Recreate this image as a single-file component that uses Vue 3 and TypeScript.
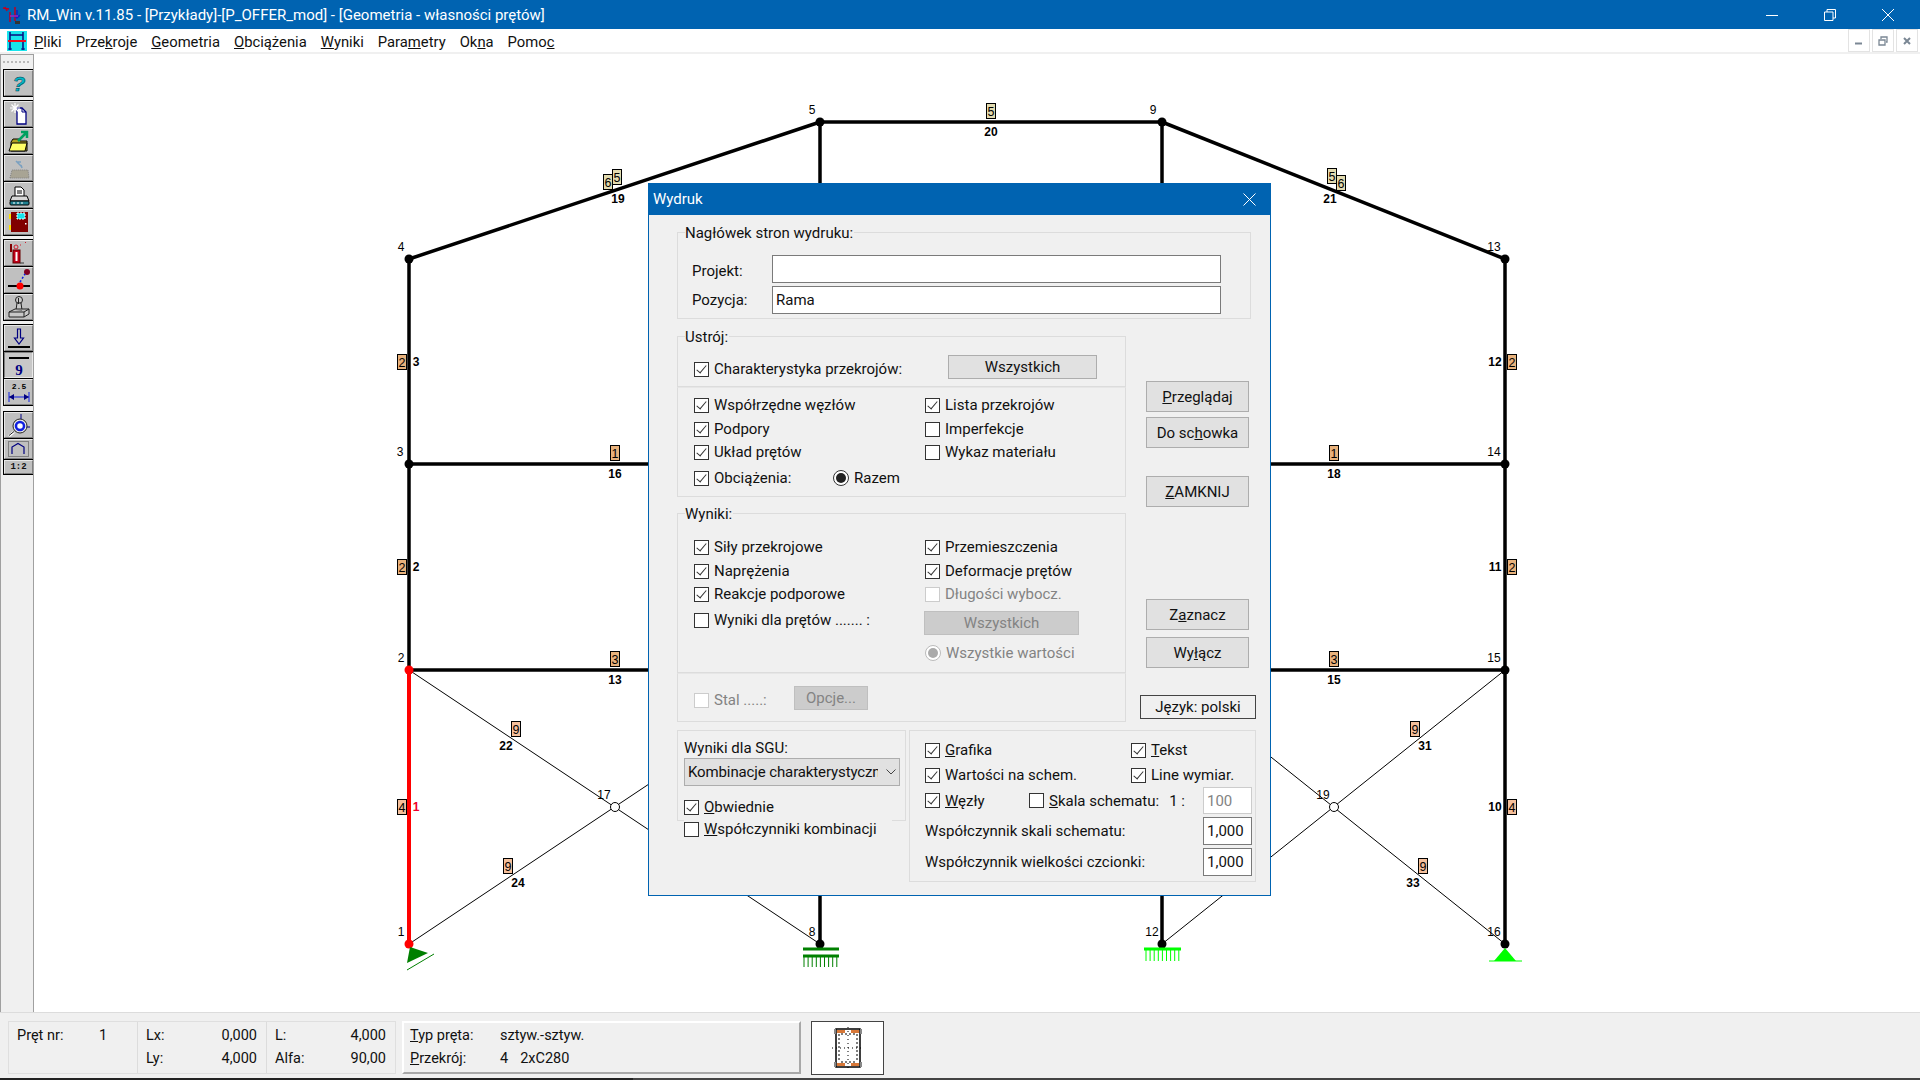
<script setup lang="ts">
interface Label { t: string; x: number; y: number; red?: boolean }
interface Section { t: string; x: number; y: number; c: string }

const menu = [
  ['', 'P', 'liki'], ['Prze', 'k', 'roje'], ['', 'G', 'eometria'], ['', 'O', 'bciążenia'],
  ['', 'W', 'yniki'], ['Para', 'm', 'etry'], ['Ok', 'n', 'a'], ['Pomo', 'c', '']
]

const thick = [
  [409, 944, 409, 259], [409, 259, 820, 122], [820, 122, 1162, 122], [1162, 122, 1505, 259],
  [1505, 259, 1505, 944], [820, 122, 820, 944], [1162, 122, 1162, 944],
  [409, 464, 1505, 464], [409, 670, 1505, 670]
]
const thin = [
  [409, 670, 820, 944], [409, 944, 820, 670], [1162, 670, 1505, 944], [1162, 944, 1505, 670]
]
const blackNodes = [
  [409, 259], [820, 122], [1162, 122], [1505, 259], [409, 464], [1505, 464],
  [1505, 670], [820, 944], [1162, 944], [1505, 944]
]
const nodeLabels: Label[] = [
  { t: '5', x: 812, y: 110 }, { t: '9', x: 1153, y: 110 }, { t: '4', x: 401, y: 247 },
  { t: '13', x: 1494, y: 247 }, { t: '3', x: 400, y: 452 }, { t: '14', x: 1494, y: 452 },
  { t: '2', x: 401, y: 658 }, { t: '15', x: 1494, y: 658 }, { t: '1', x: 401, y: 932 },
  { t: '16', x: 1494, y: 932 }, { t: '8', x: 812, y: 932 }, { t: '12', x: 1152, y: 932 },
  { t: '17', x: 604, y: 795 }, { t: '19', x: 1323, y: 795 }
]
const barLabels: Label[] = [
  { t: '20', x: 991, y: 132 }, { t: '16', x: 615, y: 474 }, { t: '18', x: 1334, y: 474 },
  { t: '13', x: 615, y: 680 }, { t: '15', x: 1334, y: 680 }, { t: '19', x: 618, y: 199 },
  { t: '21', x: 1330, y: 199 }, { t: '3', x: 416, y: 362 }, { t: '12', x: 1495, y: 362 },
  { t: '2', x: 416, y: 567 }, { t: '11', x: 1495, y: 567 }, { t: '1', x: 416, y: 807, red: true },
  { t: '10', x: 1495, y: 807 }, { t: '22', x: 506, y: 746 }, { t: '24', x: 518, y: 883 },
  { t: '31', x: 1425, y: 746 }, { t: '33', x: 1413, y: 883 }
]
const tan = '#e8b27c'
const peach = '#f4bf9b'
const sand = '#e2dbb0'
const sections: Section[] = [
  { t: '5', x: 991, y: 111, c: sand }, { t: '1', x: 615, y: 453, c: tan }, { t: '1', x: 1334, y: 453, c: tan },
  { t: '3', x: 615, y: 659, c: tan }, { t: '3', x: 1334, y: 659, c: tan }, { t: '2', x: 402, y: 362, c: tan },
  { t: '2', x: 1512, y: 362, c: tan }, { t: '2', x: 402, y: 567, c: tan }, { t: '2', x: 1512, y: 567, c: tan },
  { t: '4', x: 402, y: 807, c: peach }, { t: '4', x: 1512, y: 807, c: peach }, { t: '9', x: 516, y: 729, c: peach },
  { t: '9', x: 508, y: 866, c: peach }, { t: '9', x: 1415, y: 729, c: peach }, { t: '9', x: 1423, y: 866, c: peach },
  { t: '6', x: 608, y: 182, c: sand }, { t: '5', x: 617, y: 177, c: sand }, { t: '5', x: 1332, y: 176, c: sand },
  { t: '6', x: 1341, y: 183, c: sand }
]
const ticks8 = Array.from({ length: 9 }, (_, i) => 804 + i * 4.1)
const ticks12 = Array.from({ length: 9 }, (_, i) => 1146 + i * 4.1)
</script>

<template>
  <div class="app">
    <div class="titlebar">
      <svg class="title-icon" width="20" height="20" viewBox="0 0 20 20">
        <path d="M1 3l6 1M3 2l2 4M13 2v14M8 7v10" stroke="#c00020" fill="none" stroke-width="1.5" />
        <path d="M15 5v8M12 10l3 3 3-3" stroke="#1020c0" fill="none" stroke-width="1.5" />
        <path d="M8 11h8" stroke="#a020c0" stroke-width="1.5" />
        <rect x="13" y="16" width="5" height="3" fill="#333" />
      </svg>
      <span class="title-text">RM_Win v.11.85 - [Przykłady]-[P_OFFER_mod] - [Geometria - własności prętów]</span>
      <div class="win-btns">
        <svg width="12" height="12" viewBox="0 0 12 12"><path d="M0 6.5h12" stroke="#fff" /></svg>
        <svg width="12" height="12" viewBox="0 0 12 12"><path d="M.5 3h8.5v8.500h-8.500zM3 3V.5h8.500V9H9" stroke="#fff" fill="none" /></svg>
        <svg width="12" height="12" viewBox="0 0 12 12"><path d="M0 0l12 12M12 0L0 12" stroke="#fff" fill="none" /></svg>
      </div>
    </div>

    <div class="menubar">
      <svg class="menu-icon" width="20" height="20" viewBox="0 0 20 20">
        <rect width="20" height="20" fill="#19e4ec" />
        <path d="M3 1v18M16 1v18M3 4h13" stroke="#0a0a80" fill="none" stroke-width="1.500" />
        <path d="M1 10h18" stroke="#f01020" stroke-width="2" />
        <path d="M1 18h4M14 18h4" stroke="#0a0a80" />
      </svg>
      <span v-for="m in menu" :key="m.join('')" class="menu-item">{{ m[0] }}<u>{{ m[1] }}</u>{{ m[2] }}</span>
      <div class="mdi-btns">
        <span class="mdi"><svg width="10" height="10" viewBox="0 0 10 10"><path d="M1 7.500h7" stroke="#7a8794" stroke-width="2" /></svg></span>
        <span class="mdi"><svg width="10" height="10" viewBox="0 0 10 10"><path d="M1 4h6v5H1zM3 3V1h6v5H8" stroke="#7a8794" fill="none" stroke-width="1.300" /></svg></span>
        <span class="mdi"><svg width="10" height="10" viewBox="0 0 10 10"><path d="M2 2l6 6M8 2L2 8" stroke="#7a8794" fill="none" stroke-width="2" /></svg></span>
      </div>
    </div>

    <div class="middle">
      <div class="toolbar">
        <div class="grip"></div>
        <div class="tb-group">
          <div class="tb-btn">
            <svg width="24" height="24" viewBox="0 0 24 24"><text x="12" y="20" text-anchor="middle" class="q" >?</text></svg>
          </div>
        </div>
        <div class="tb-group">
          <div class="tb-btn">
            <svg width="24" height="24" viewBox="0 0 24 24">
              <path d="M10 6h5l4 4v12H10z" fill="#fff" stroke="#000080" stroke-width="1.300" />
              <path d="M15 6v4h4" fill="none" stroke="#000080" />
              <path d="M8 1v10M3 6h10M4.500 2.500l7 7M11.500 2.500l-7 7" stroke="#fff" stroke-width="1.200" />
            </svg>
          </div>
          <div class="tb-btn">
            <svg width="24" height="24" viewBox="0 0 24 24">
              <path d="M4 13l2-3h6l1 2h7v10H4z" fill="#b0a020" stroke="#000" />
              <path d="M2 22l3-8h15l-2 8z" fill="#ffff66" stroke="#000" />
              <path d="M11 12l8-8M14 3h6v6" stroke="#00a060" fill="none" stroke-width="2.500" />
            </svg>
          </div>
          <div class="tb-btn">
            <svg width="24" height="24" viewBox="0 0 24 24">
              <path d="M3 22l2-8h16l1 8z" fill="#a8a494" stroke="#808080" stroke-dasharray="1 1" />
              <path d="M9 5l6 6M14 6h-4M14 9l1 3" stroke="#7aa0c0" stroke-width="1.500" fill="none" />
            </svg>
          </div>
          <div class="tb-btn">
            <svg width="24" height="24" viewBox="0 0 24 24">
              <path d="M8 4h6l3 3v7H8z" fill="#fff" stroke="#000" />
              <path d="M10 8h5M10 10h5" stroke="#000" />
              <path d="M5 13h15l2 5H3z" fill="#d8d8d8" stroke="#000" />
              <rect x="3" y="18" width="19" height="4" rx="1" fill="#208090" stroke="#000" />
              <path d="M6 20h2M10 20h2M14 20h2" stroke="#fff" />
            </svg>
          </div>
          <div class="tb-btn">
            <svg width="24" height="24" viewBox="0 0 24 24">
              <rect x="4" y="2" width="17" height="20" fill="#800000" />
              <rect x="10" y="3" width="8" height="6" fill="#19e4ec" stroke="#fff" stroke-dasharray="2 1" />
              <path d="M3 4v5M3 15v5" stroke="#ffe000" stroke-width="2" />
              <rect x="18" y="13" width="1.500" height="1.500" fill="#fff" />
            </svg>
          </div>
        </div>
        <div class="tb-group">
          <div class="tb-btn">
            <svg width="24" height="24" viewBox="0 0 24 24">
              <path d="M4 3v8" stroke="#800000" stroke-width="2" />
              <rect x="6" y="9" width="7" height="13" fill="#c00018" stroke="#600" />
              <rect x="8.500" y="11" width="2" height="9" fill="#fff" />
              <circle cx="9" cy="6" r="2" fill="none" stroke="#d02030" />
              <path d="M13 4l1 0M18 1.500l1 0" stroke="#d02030" stroke-dasharray="1 1" />
              <path d="M13 22h4" stroke="#333" />
            </svg>
          </div>
          <div class="tb-btn">
            <svg width="24" height="24" viewBox="0 0 24 24">
              <path d="M1 18h22" stroke="#000" stroke-width="2" />
              <circle cx="13" cy="18" r="3.500" fill="#f00" />
              <circle cx="20" cy="4" r="3" fill="#800020" />
              <path d="M13 14l5-8" stroke="#1020e0" stroke-width="1.600" stroke-dasharray="2 2" />
            </svg>
          </div>
          <div class="tb-btn">
            <svg width="24" height="24" viewBox="0 0 24 24">
              <circle cx="12" cy="5" r="3.500" fill="#c8c8c8" stroke="#222" />
              <path d="M10 8l-1 7h6l-1-7zM11.500 3v6" fill="#c8c8c8" stroke="#222" />
              <path d="M2 17l6-3h14v5l-5 3H2zM2 17h15l5-3M17 17v5" fill="#c8c8c8" stroke="#222" />
            </svg>
          </div>
        </div>
        <div class="tb-group">
          <div class="tb-btn">
            <svg width="24" height="24" viewBox="0 0 24 24">
              <path d="M1 21h22" stroke="#000" stroke-width="2" />
              <path d="M10.500 3h3v9h3l-4.500 6-4.500-6h3z" fill="#c0c0c0" stroke="#000080" stroke-width="1.200" />
            </svg>
          </div>
          <div class="tb-btn pressed">
            <svg width="24" height="24" viewBox="0 0 24 24">
              <path d="M2 5h20" stroke="#000" stroke-width="2" />
              <text x="12" y="22" text-anchor="middle" class="nine">9</text>
            </svg>
          </div>
          <div class="tb-btn">
            <svg width="24" height="24" viewBox="0 0 24 24">
              <text x="12" y="9" text-anchor="middle" class="dim">2.5</text>
              <path d="M2 12v10M22 12v10M2 17h20" stroke="#1020e0" />
              <path d="M2 17l5-3v6zM22 17l-5-3v6z" fill="#000080" />
            </svg>
          </div>
        </div>
        <div class="tb-group tight">
          <div class="tb-btn">
            <svg width="24" height="24" viewBox="0 0 24 24">
              <circle cx="13" cy="13" r="7" fill="#e8e8e8" stroke="#222" />
              <circle cx="13" cy="13" r="4" fill="#fff" stroke="#1020e0" stroke-width="2.500" />
              <path d="M14 1v5M20 14h3" stroke="#000080" />
              <path d="M7 19l-5 4" stroke="#fff" stroke-width="2.500" />
              <path d="M7 18.500l-5 4" stroke="#222" />
            </svg>
          </div>
          <div class="tb-btn arch">
            <svg width="21" height="16" viewBox="0 0 21 16">
              <rect x=".5" y=".5" width="20" height="15" fill="none" stroke="#808080" />
              <path d="M4 13V6l6-3.500L16 6v7" fill="none" stroke="#000080" stroke-width="1.200" />
            </svg>
          </div>
          <div class="tb-btn scale">1:2</div>
        </div>
      </div>

      <svg class="canvas" width="1886" height="958" viewBox="34 54 1886 958">
        <line v-for="(l, i) in thin" :key="'t' + i" :x1="l[0]" :y1="l[1]" :x2="l[2]" :y2="l[3]" stroke="#000" stroke-width="1" />
        <line v-for="(l, i) in thick" :key="'b' + i" :x1="l[0]" :y1="l[1]" :x2="l[2]" :y2="l[3]" stroke="#000" stroke-width="3.500" />
        <line x1="409" y1="944" x2="409" y2="670" stroke="#f00" stroke-width="4" />

        <circle v-for="(n, i) in blackNodes" :key="'n' + i" :cx="n[0]" :cy="n[1]" r="4.500" fill="#000" />
        <circle cx="409" cy="670" r="4.500" fill="#f00" />
        <circle cx="409" cy="944" r="4.500" fill="#f00" />
        <circle cx="615" cy="807" r="4.500" fill="#fff" stroke="#000" />
        <circle cx="1334" cy="807" r="4.500" fill="#fff" stroke="#000" />

        <path d="M410 947l18 6-21 10z" fill="#008000" />
        <line x1="407" y1="970" x2="434" y2="954" stroke="#008000" />
        <path d="M803 949h36M803 956h36" stroke="#008000" stroke-width="3" />
        <line v-for="x in ticks8" :key="'s' + x" :x1="x" y1="956" :x2="x" y2="967" stroke="#008000" />
        <path d="M1144 949h37" stroke="#00ff00" stroke-width="3" />
        <line v-for="x in ticks12" :key="'u' + x" :x1="x" y1="949" :x2="x" y2="961" stroke="#00ff00" />
        <path d="M1505 948l-11 13h22z" fill="#00ff00" />
        <line x1="1489" y1="961" x2="1522" y2="961" stroke="#00ff00" />

        <g v-for="(s, i) in sections" :key="'c' + i">
          <rect :x="s.x - 4.500" :y="s.y - 7.500" width="9" height="15" :fill="s.c" stroke="#000" />
          <text :x="s.x" :y="s.y + 4.500" text-anchor="middle" class="sec">{{ s.t }}</text>
        </g>
        <text v-for="(l, i) in nodeLabels" :key="'l' + i" :x="l.x" :y="l.y + 4" text-anchor="middle" class="node">{{ l.t }}</text>
        <text v-for="(l, i) in barLabels" :key="'r' + i" :x="l.x" :y="l.y + 4" text-anchor="middle" class="bar" :class="{ red: l.red }">{{ l.t }}</text>
      </svg>
    </div>

    <div class="statusbar">
      <div class="st-box">
        <div class="cell first">
          <span>Pręt nr:</span><span class="one">1</span>
        </div>
        <div class="cell">
          <span>Lx:</span><span class="val">0,000</span>
          <span>Ly:</span><span class="val">4,000</span>
        </div>
        <div class="cell">
          <span>L:</span><span class="val">4,000</span>
          <span>Alfa:</span><span class="val">90,00</span>
        </div>
      </div>
      <div class="st-raised">
        <span><u>T</u>yp pręta:</span><span>sztyw.-sztyw.</span>
        <span><u>P</u>rzekrój:</span><span class="sect"><span>4</span><span>2xC280</span></span>
      </div>
      <div class="st-preview">
        <svg width="40" height="44" viewBox="0 0 40 44">
          <path d="M4 22h32M20 1v42" stroke="#000" stroke-dasharray="1 3" />
          <rect x="8" y="3" width="24" height="38" fill="none" stroke="#000" stroke-width="1.500" />
          <path d="M11 8v28M29 8v28M13 8h14M13 36h14" stroke="#000" stroke-dasharray="2 2" />
          <path d="M9 4h8v3H9zM23 4h8v3h-8zM9 37h8v3H9zM23 37h8v3h-8z" fill="#d87838" />
          <path d="M7 3v5M33 3v5M7 36v5M33 36v5" stroke="#888" stroke-width="2" />
        </svg>
      </div>
    </div>
    <div class="bottom-strip"></div>

    <div class="dialog">
      <div class="dlg-title">
        <span>Wydruk</span>
        <svg width="13" height="13" viewBox="0 0 13 13"><path d="M.5.500l12 12M12.500.500l-12 12" stroke="#fff" fill="none" /></svg>
      </div>
      <div class="dlg-body">
        <div class="group g-head">
          <span class="legend">Nagłówek stron wydruku:</span>
          <span class="lbl-low">Projekt:</span><span class="input"></span>
          <span>Pozycja:</span><span class="input">Rama</span>
        </div>

        <div class="dlg-mid">
          <div class="dlg-left">
            <div class="group g-ustroj">
              <span class="legend">Ustrój:</span>
              <label class="chk"><span class="box on"></span>Charakterystyka przekrojów:</label>
              <button class="btn">Wszystkich</button>
            </div>
            <div class="group g-list joined">
              <label class="chk"><span class="box on"></span>Współrzędne węzłów</label>
              <label class="chk"><span class="box on"></span>Lista przekrojów</label>
              <label class="chk"><span class="box on"></span>Podpory</label>
              <label class="chk"><span class="box"></span>Imperfekcje</label>
              <label class="chk"><span class="box on"></span>Układ prętów</label>
              <label class="chk"><span class="box"></span>Wykaz materiału</label>
              <div class="load-row">
                <label class="chk load"><span class="box on"></span>Obciążenia:</label>
                <label class="chk"><span class="radio on"></span>Razem</label>
              </div>
            </div>

            <div class="group g-wyniki">
              <span class="legend">Wyniki:</span>
              <label class="chk"><span class="box on"></span>Siły przekrojowe</label>
              <label class="chk"><span class="box on"></span>Przemieszczenia</label>
              <label class="chk"><span class="box on"></span>Naprężenia</label>
              <label class="chk"><span class="box on"></span>Deformacje prętów</label>
              <label class="chk"><span class="box on"></span>Reakcje podporowe</label>
              <label class="chk off"><span class="box"></span>Długości wybocz.</label>
              <label class="chk"><span class="box"></span>Wyniki dla prętów ....... :</label>
              <button class="btn dis all">Wszystkich</button>
              <span></span>
              <label class="chk off"><span class="radio on"></span>Wszystkie wartości</label>
            </div>
            <div class="group g-stal joined">
              <label class="chk off"><span class="box"></span>Stal .....:</label>
              <button class="btn dis">Opcje...</button>
            </div>
          </div>

          <div class="dlg-right">
            <button class="btn side b1"><u>P</u>rzeglądaj</button>
            <button class="btn side b2">Do sc<u>h</u>owka</button>
            <button class="btn side b3"><u>Z</u>AMKNIJ</button>
            <button class="btn side b4">Z<u>a</u>znacz</button>
            <button class="btn side b5">Wy<u>ł</u>ącz</button>
            <button class="btn lang">Język: polski</button>
          </div>
        </div>

        <div class="dlg-bottom">
          <div class="group g-sgu">
            <div class="sgu-label">Wyniki dla SGU:</div>
            <div class="select">
              <span class="select-text">Kombinacje charakterystyczne</span>
              <svg width="10" height="6" viewBox="0 0 10 6"><path d="M.5.500L5 5 9.500.500" stroke="#444" fill="none" /></svg>
            </div>
            <label class="chk sgu-a"><span class="box on"></span><span><u>O</u>bwiednie</span></label>
            <label class="chk sgu-b"><span class="box"></span><span><u>W</u>spółczynniki kombinacji</span></label>
          </div>
          <div class="group g-opts">
            <div class="opts-top">
              <label class="chk"><span class="box on"></span><span><u>G</u>rafika</span></label>
              <label class="chk"><span class="box on"></span><span><u>T</u>ekst</span></label>
              <label class="chk"><span class="box on"></span>Wartości na schem.</label>
              <label class="chk"><span class="box on"></span>Line wymiar.</label>
            </div>
            <div class="opts-row">
              <label class="chk wezly"><span class="box on"></span><span><u>W</u>ęzły</span></label>
              <label class="chk"><span class="box"></span><span><u>S</u>kala schematu:</span></label>
              <span class="ratio">1 :</span>
              <span class="input small dis-input">100</span>
            </div>
            <div class="opts-row">
              <span>Współczynnik skali schematu:</span>
              <span class="input small">1,000</span>
            </div>
            <div class="opts-row">
              <span>Współczynnik wielkości czcionki:</span>
              <span class="input small">1,000</span>
            </div>
          </div>
        </div>
      </div>
    </div>
  </div>
</template>

<style scoped>
.app {
  position: relative;
  width: 1920px;
  height: 1080px;
  display: flex;
  flex-direction: column;
  overflow: hidden;
  background: #fff;
  color: #111;
  font-family: Roboto, "Liberation Sans", sans-serif;
  font-size: 15px;
}

/* title + menu */
.titlebar {
  height: 29px;
  flex: none;
  background: #0063b1;
  color: #fff;
  display: flex;
  align-items: center;
  padding-left: 2px;
}
.title-icon { margin-right: 5px; }
.win-btns {
  margin-left: auto;
  display: flex;
  gap: 46px;
  padding-right: 26px;
}
.menubar {
  height: 25px;
  box-sizing: border-box;
  flex: none;
  display: flex;
  align-items: center;
  gap: 14px;
  padding-left: 7px;
  border-bottom: 2px solid #f0f0f0;
}
.menu-icon { margin-right: -7px; }
.menu-item {
  white-space: nowrap;
  font-size: 14.800px;
  margin-top: 2px;
}
.mdi-btns {
  margin-left: auto;
  display: flex;
  gap: 2px;
  padding-right: 2px;
  height: 100%;
}
.mdi {
  width: 22px;
  border: 1px solid #e3e3e3;
  display: flex;
  align-items: center;
  justify-content: center;
  box-sizing: border-box;
}

.middle {
  flex: 1;
  display: flex;
  min-height: 0;
}

/* left toolbar */
.toolbar {
  width: 34px;
  flex: none;
  box-sizing: border-box;
  background: #f0f0f0;
  border: 1px solid #a0a0a0;
  border-bottom: none;
  padding-left: 2px;
}
.grip {
  margin: 6px 2px 6px 0;
  height: 2px;
  background: repeating-linear-gradient(90deg, #b8b8b8 0 2px, transparent 2px 4px);
}
.tb-group {
  background: #000;
  padding: 1px 0 1px 1px;
  margin-top: 3px;
  display: flex;
  flex-direction: column;
  gap: 1px;
}
.tb-group.tight { margin-top: 5px; }
.tb-btn {
  height: 26px;
  box-sizing: border-box;
  background: #c0c0c0;
  border-top: 1px solid #e8e8e8;
  border-left: 1px solid #e8e8e8;
  border-right: 1px solid #808080;
  border-bottom: 1px solid #808080;
  display: flex;
  align-items: center;
  justify-content: center;
  overflow: hidden;
}
.tb-btn.pressed {
  background: #c8c8c8;
  border-color: #808080 #e8e8e8 #e8e8e8 #808080;
}
.tb-btn.arch { height: 20px; }
.tb-btn.scale {
  height: 14px;
  font: bold 9px "Liberation Mono", monospace;
}
.q {
  font: italic bold 21px "Liberation Sans", sans-serif;
  fill: #00b8c8;
  stroke: #004050;
  stroke-width: .5px;
}
.nine {
  font: bold 15px "Liberation Serif", serif;
  fill: #000080;
}
.dim {
  font: bold 8px "Liberation Mono", monospace;
  fill: #000;
}

/* drawing */
.canvas {
  display: block;
  flex: 1;
}
.node, .sec, .bar {
  font-family: "Liberation Sans", sans-serif;
  font-size: 12px;
  fill: #000;
}
.sec { font-size: 12.500px; }
.bar { font-weight: bold; }
.bar.red { fill: #f0002a; }

/* status bar */
.statusbar {
  height: 66px;
  flex: none;
  box-sizing: border-box;
  background: #f0f0f0;
  border-top: 1px solid #dcdcdc;
  padding: 8px 0 0 8px;
  display: flex;
  align-items: flex-start;
  font-size: 14.500px;
}
.st-box {
  width: 388px;
  height: 53px;
  box-sizing: border-box;
  border: 1px solid #dfdfdf;
  display: flex;
}
.cell {
  flex: 1;
  display: grid;
  grid-template-columns: 1fr auto;
  grid-auto-rows: 23px;
  align-content: center;
  padding: 5px 9px 0 8px;
  border-left: 1px solid #dcdcdc;
}
.cell.first {
  flex: none;
  width: 128px;
  box-sizing: border-box;
  border-left: none;
  align-content: start;
  padding-top: 5px;
  grid-template-columns: 82px 1fr;
}
.val { text-align: right; }
.st-raised {
  margin-left: 6px;
  width: 399px;
  height: 53px;
  box-sizing: border-box;
  background: #f0f0f0;
  border-top: 2px solid #fff;
  border-left: 2px solid #fff;
  border-right: 2px solid #a8a8a8;
  border-bottom: 2px solid #a8a8a8;
  display: grid;
  grid-template-columns: 90px 1fr;
  grid-auto-rows: 23px;
  align-content: center;
  padding: 5px 0 0 6px;
}
.sect {
  display: flex;
  gap: 12px;
}
.st-preview {
  margin-left: 10px;
  width: 73px;
  height: 54px;
  box-sizing: border-box;
  background: #fff;
  border: 1px solid #444;
  display: flex;
  align-items: center;
  justify-content: center;
}
.bottom-strip {
  height: 2px;
  flex: none;
  background: linear-gradient(90deg, #222 0 633px, #444 633px);
}

/* print dialog */
.dialog {
  position: absolute;
  left: 648px;
  top: 183px;
  width: 623px;
  height: 713px;
  box-sizing: border-box;
  background: #f0f0f0;
  border: 1px solid #0063b1;
  border-top: none;
}
.dlg-title {
  height: 32px;
  background: #0063b1;
  color: #fff;
  display: flex;
  align-items: center;
  justify-content: space-between;
  padding: 0 14px 0 4px;
}
.dlg-body { padding: 17px 0 0 28px; }
.group {
  position: relative;
  box-sizing: border-box;
  border: 1px solid #dcdcdc;
}
.legend {
  position: absolute;
  top: -9px;
  left: 7px;
  padding-right: 1px;
  line-height: 18px;
  background: #f0f0f0;
}
.g-head {
  width: 574px;
  height: 87px;
  display: grid;
  grid-template-columns: 80px 449px;
  grid-auto-rows: 28px;
  row-gap: 3px;
  align-items: center;
  padding: 22px 0 0 14px;
}
.lbl-low { margin-top: 3px; }
.input {
  height: 28px;
  box-sizing: border-box;
  background: #fff;
  border: 1px solid #7a7a7a;
  padding-left: 3px;
  line-height: 27px;
}
.dlg-mid {
  display: flex;
  margin-top: 17px;
}
.dlg-left { width: 449px; }
.chk {
  display: flex;
  align-items: center;
  gap: 5px;
  height: 20px;
  white-space: nowrap;
}
.chk.off { color: #838383; }
.box {
  width: 15px;
  height: 15px;
  flex: none;
  box-sizing: border-box;
  position: relative;
  background: #fff;
  border: 1px solid #333;
}
.off .box { border-color: #ccc; }
.box.on::after {
  content: "";
  position: absolute;
  left: 4px;
  top: 0;
  width: 4px;
  height: 9px;
  border: solid #333;
  border-width: 0 1px 1px 0;
  transform: rotate(40deg);
}
.radio {
  width: 16px;
  height: 16px;
  flex: none;
  box-sizing: border-box;
  position: relative;
  border-radius: 50%;
  background: #fff;
  border: 1px solid #333;
}
.off .radio { border-color: #bbb; }
.radio.on::after {
  content: "";
  position: absolute;
  left: 2px;
  top: 2px;
  width: 10px;
  height: 10px;
  border-radius: 50%;
  background: #222;
}
.off .radio.on::after { background: #aaa; }
.btn {
  box-sizing: border-box;
  height: 24px;
  padding: 0;
  background: #e1e1e1;
  border: 1px solid #adadad;
  color: #111;
  font: inherit;
}
.btn.dis {
  background: #ccc;
  border-color: #bfbfbf;
  color: #838383;
}
.g-ustroj {
  height: 51px;
  display: grid;
  grid-template-columns: 254px 149px;
  align-items: start;
  padding: 18px 0 0 16px;
}
.g-ustroj .chk { margin-top: 4px; }
.joined { border-top-color: #e6e6e6; }
.g-list {
  height: 110px;
  display: grid;
  grid-template-columns: 231px 1fr;
  grid-template-rows: 24px 24px 22px 30px;
  align-items: center;
  padding: 5px 0 0 16px;
}
.load-row {
  grid-column: 1 / 3;
  display: flex;
}
.load { width: 139px; }
.g-wyniki {
  margin-top: 16px;
  height: 160px;
  display: grid;
  grid-template-columns: 231px 154px;
  grid-template-rows: 24px 24px 22px 30px 36px;
  align-items: center;
  padding: 21px 0 0 16px;
}
.btn.all {
  align-self: start;
  margin: 6px 0 0 -1px;
}
.g-stal {
  height: 49px;
  display: grid;
  grid-template-columns: 100px 74px;
  align-items: start;
  padding: 12px 0 0 16px;
}
.g-stal .chk { margin-top: 4px; }
.dlg-right {
  width: 103px;
  margin-left: 20px;
  display: flex;
  flex-direction: column;
}
.side { height: 31px; flex: none; }
.b1 { margin-top: 45px; }
.b2 { margin-top: 5px; }
.b3 { margin-top: 28px; }
.b4 { margin-top: 92px; }
.b5 { margin-top: 7px; }
.lang {
  margin: 27px 0 0 -6px;
  width: 116px;
  flex: none;
  background: #f0f0f0;
  border-color: #444;
}
.dlg-bottom {
  display: flex;
  gap: 3px;
  margin-top: 8px;
}
.g-sgu {
  width: 229px;
  height: 91px;
  padding: 7px 0 0 6px;
}
.sgu-label {
  height: 20px;
  line-height: 20px;
}
.select {
  width: 216px;
  height: 28px;
  box-sizing: border-box;
  background: #e1e1e1;
  border: 1px solid #adadad;
  display: flex;
  align-items: center;
  padding-left: 3px;
}
.select-text {
  width: 190px;
  overflow: hidden;
  white-space: nowrap;
  margin-right: 8px;
  letter-spacing: -.12px;
}
.sgu-a { margin-top: 11px; }
.sgu-b {
  margin-top: 2px;
  width: 208px;
  background: #f0f0f0;
}
.g-opts {
  width: 347px;
  height: 152px;
  padding: 6px 3px 0 15px;
}
.opts-top {
  display: grid;
  grid-template-columns: 206px 1fr;
  grid-template-rows: 26px 24px;
  align-items: center;
}
.opts-row {
  display: flex;
  align-items: center;
  justify-content: space-between;
  margin-top: 3px;
}
.opts-top + .opts-row { margin-top: 0; }
.wezly { width: 104px; flex: none; }
.ratio { margin: 0 auto 0 10px; }
.small { width: 49px; flex: none; }
.dis-input {
  border-color: #ccc;
  color: #838383;
  height: 27px;
}
</style>

<style>
html, body { margin: 0; padding: 0; background: #fff; }
</style>
